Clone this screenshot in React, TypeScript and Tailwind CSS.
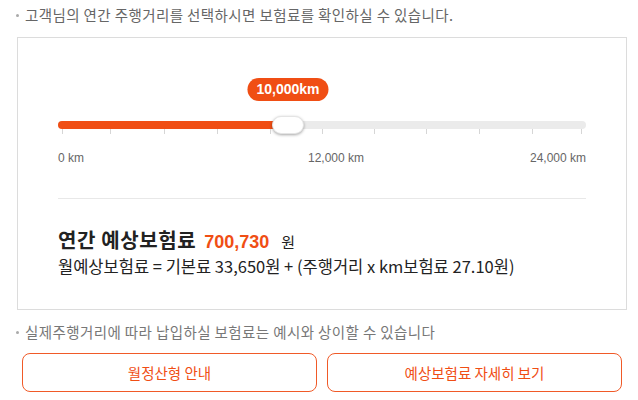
const ticks = [4, 52, 106, 159, 212, 264, 316, 368, 421, 474, 523];

export default function App() {
  const value = 10000;
  const max = 24000;
  const trackWidth = 528;
  const pos = Math.round(230 * (value / 10000));

  return (
    <div className="w-[638px] h-[400px] bg-white text-[#666] font-['Noto_Sans_CJK_KR','Liberation_Sans',sans-serif]">
      <p className="flex items-center gap-[6px] pl-[16px] pt-[5px] text-[14.5px] tracking-[0.4px] leading-[20px] text-[#666]">
        <span className="w-[3px] h-[3px] rounded-full bg-[#aaa]" />
        고객님의 연간 주행거리를 선택하시면 보험료를 확인하실 수 있습니다.
      </p>

      <div className="ml-[17px] mt-[12px] w-[610px] h-[273px] border border-[#dcdcdc] px-10 pt-[40px]">
        {/* slider */}
        <div className="relative pt-[43px]" style={{ width: trackWidth }}>
          <div
            className="absolute top-0 -translate-x-1/2 h-[23px] px-[9px] rounded-full flex items-center text-white text-[14px] font-bold font-['Liberation_Sans',sans-serif] bg-[#f04e14]"
            style={{ left: pos }}
          >
            {value.toLocaleString()}km
          </div>
          <div className="relative h-2 rounded-full bg-[#ebebeb]">
            <div
              className="absolute left-0 top-0 h-full rounded-full bg-[#f04e14]"
              style={{ width: pos }}
            />
            <div
              className="absolute top-1/2 -translate-x-1/2 -translate-y-1/2 w-8 h-[18px] rounded-full bg-white border border-[#e4e4e4] shadow-[0_1px_3px_rgba(0,0,0,0.35)]"
              style={{ left: pos }}
            />
          </div>
          <div className="relative h-[6px]">
            {ticks.map((t) => (
              <span
                key={t}
                className="absolute top-0 w-px h-[5px] bg-[#d6d6d6]"
                style={{ left: t }}
              />
            ))}
          </div>
          <div className="flex mt-[14px] text-[12px] leading-[18px] text-[#666] font-['Liberation_Sans',sans-serif]">
            <span>0 km</span>
            <span className="ml-[224px]">{(max / 2).toLocaleString()} km</span>
            <span className="ml-auto">{max.toLocaleString()} km</span>
          </div>
        </div>

        <div className="mt-[31px] border-t border-[#e8e8e8]" />

        <div className="mt-[28px] text-[#222]">
          <div className="flex items-baseline leading-[26px]">
            <span className="text-[20px] tracking-[0.6px] font-bold">연간 예상보험료</span>
            <span className="ml-[8px] text-[18px] font-bold font-['Liberation_Sans',sans-serif] text-[#f04e14]">
              700,730
            </span>
            <span className="ml-[12px] text-[15px]">원</span>
          </div>
          <p className="text-[16.5px] leading-[22px]">
            월예상보험료 = 기본료 33,650원 + (주행거리 x km보험료 27.10원)
          </p>
        </div>
      </div>

      <p className="flex items-center gap-[6px] pl-[16px] mt-[12px] text-[14.5px] tracking-[0.4px] leading-[20px] text-[#777]">
        <span className="w-[3px] h-[3px] rounded-full bg-[#aaa]" />
        실제주행거리에 따라 납입하실 보험료는 예시와 상이할 수 있습니다
      </p>

      <div className="flex gap-[10px] pl-[22px] mt-[11px]">
        <button className="w-[295px] h-[39px] rounded-[8px] border border-[#f05a28] text-[14.5px] text-[#f04e14]">
          월정산형 안내
        </button>
        <button className="w-[295px] h-[39px] rounded-[8px] border border-[#f05a28] text-[14.5px] text-[#f04e14]">
          예상보험료 자세히 보기
        </button>
      </div>
    </div>
  );
}
